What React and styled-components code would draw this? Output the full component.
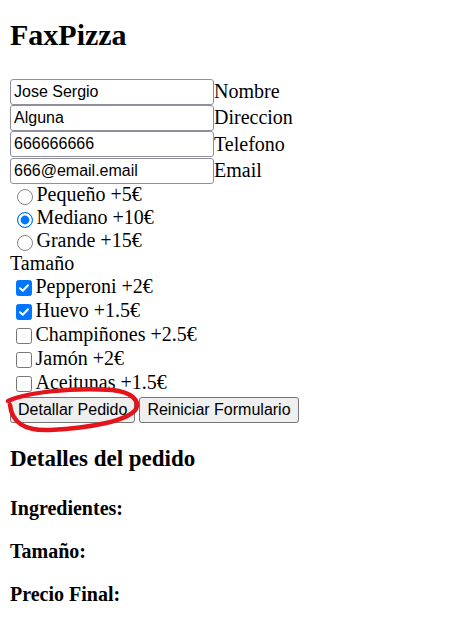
import React from "react";
import styled, { createGlobalStyle } from "styled-components";

const GlobalStyle = createGlobalStyle`
  body {
    margin: 0;
    background: #fff;
    color: #000;
    font-family: "Liberation Serif", "Times New Roman", serif;
    font-size: 20px;
  }
`;

const Page = styled.div`
  padding: 18px 10px 0;
`;

const Title = styled.h1`
  font-size: 30px;
  font-weight: bold;
  line-height: normal;
  margin: 0 0 26.5px;
`;

const Form = styled.form`
  display: flex;
  flex-direction: column;
`;

const FieldRow = styled.div`
  display: flex;
  align-items: center;
  height: 26.3px;
`;

const TextInput = styled.input`
  box-sizing: border-box;
  width: 204px;
  height: 26px;
  margin: 0;
  padding: 0 3px;
  border: 1px solid #8f8f9d;
  border-radius: 3px;
  font-family: "Liberation Sans", Arial, sans-serif;
  font-size: 16px;
  color: #000;
  background: #fff;
`;

const FieldLabel = styled.label`
  line-height: 23px;
`;

const OptionGroup = styled.div`
  display: flex;
  flex-direction: column;
  margin-top: ${({ $offset }) => $offset || 0}px;
`;

const OptionRow = styled.label`
  display: flex;
  align-items: flex-start;
  height: ${({ $h }) => $h}px;
  line-height: 23px;
`;

const RadioDot = styled.span`
  box-sizing: border-box;
  flex: none;
  width: 16px;
  height: 16px;
  margin: 5.5px 4px 0 6.5px;
  border-radius: 50%;
  border: 1.6px solid ${({ $on }) => ($on ? "#0075ff" : "#858585")};
  background: ${({ $on }) => ($on ? "#0075ff" : "#fff")};
  box-shadow: ${({ $on }) => ($on ? "inset 0 0 0 2.6px #fff" : "none")};
`;

const CheckBox = styled.span`
  box-sizing: border-box;
  flex: none;
  display: flex;
  align-items: center;
  justify-content: center;
  width: 16px;
  height: 16px;
  margin: 5px 4px 0 5.5px;
  border-radius: 2.5px;
  border: 1.6px solid ${({ $on }) => ($on ? "#0075ff" : "#767676")};
  background: ${({ $on }) => ($on ? "#0075ff" : "#fff")};
`;

const GroupCaption = styled.div`
  line-height: 23px;
`;

const ButtonRow = styled.div`
  position: relative;
  display: flex;
  gap: 4px;
  margin-top: 2px;
`;

const Button = styled.button`
  box-sizing: border-box;
  height: 26px;
  margin: 0;
  padding: 0 7px;
  border: 1px solid #767676;
  border-radius: 3px;
  background: #efefef;
  font-family: "Liberation Sans", Arial, sans-serif;
  font-size: 16px;
  color: #000;
`;

const Scribble = styled.svg`
  position: absolute;
  left: -10px;
  top: -14px;
  width: 160px;
  height: 50px;
  pointer-events: none;
  overflow: visible;
`;

const SectionTitle = styled.h3`
  font-size: 23px;
  font-weight: bold;
  line-height: normal;
  margin: 23px 0 25px;
`;

const DetailLine = styled.h4`
  font-size: 20px;
  font-weight: bold;
  line-height: 23px;
  margin: 0 0 20px;
`;

const sizes = [
  { label: "Pequeño +5€", checked: false },
  { label: "Mediano +10€", checked: true },
  { label: "Grande +15€", checked: false },
];

const toppings = [
  { label: "Pepperoni +2€", checked: true },
  { label: "Huevo +1.5€", checked: true },
  { label: "Champiñones +2.5€", checked: false },
  { label: "Jamón +2€", checked: false },
  { label: "Aceitunas +1.5€", checked: false },
];

const fields = [
  { value: "Jose Sergio", label: "Nombre" },
  { value: "Alguna", label: "Direccion" },
  { value: "666666666", label: "Telefono" },
  { value: "666@email.email", label: "Email" },
];

export default function App() {
  return (
    <Page>
      <GlobalStyle />
      <Title>FaxPizza</Title>
      <Form onSubmit={(e) => e.preventDefault()}>
        {fields.map((f) => (
          <FieldRow key={f.label}>
            <TextInput defaultValue={f.value} />
            <FieldLabel>{f.label}</FieldLabel>
          </FieldRow>
        ))}
        <OptionGroup $offset={-0.5}>
          {sizes.map((s) => (
            <OptionRow key={s.label} $h={23}>
              <RadioDot $on={s.checked} />
              {s.label}
            </OptionRow>
          ))}
        </OptionGroup>
        <GroupCaption>Tamaño</GroupCaption>
        <OptionGroup>
          {toppings.map((t) => (
            <OptionRow key={t.label} $h={24}>
              <CheckBox $on={t.checked}>
                {t.checked && (
                  <svg width="12" height="12" viewBox="0 0 12 12">
                    <path
                      d="M2 6.2 L4.8 8.8 L10 3.2"
                      fill="none"
                      stroke="#fff"
                      strokeWidth="2"
                      strokeLinecap="round"
                      strokeLinejoin="round"
                    />
                  </svg>
                )}
              </CheckBox>
              {t.label}
            </OptionRow>
          ))}
        </OptionGroup>
        <ButtonRow>
          <Button type="submit">Detallar Pedido</Button>
          <Button type="reset">Reiniciar Formulario</Button>
          <Scribble viewBox="0 382 160 50">
            <path
              d="M 8 400 C 25 392, 70 386, 112 389 C 132 391, 140 400, 136 408 C 128 420, 90 427, 50 429 C 25 430, 12 422, 10 404"
              fill="none"
              stroke="#e3141b"
              strokeWidth="4.5"
              strokeLinecap="round"
            />
          </Scribble>
        </ButtonRow>
      </Form>
      <SectionTitle>Detalles del pedido</SectionTitle>
      <DetailLine>Ingredientes:</DetailLine>
      <DetailLine>Tamaño:</DetailLine>
      <DetailLine>Precio Final:</DetailLine>
    </Page>
  );
}
